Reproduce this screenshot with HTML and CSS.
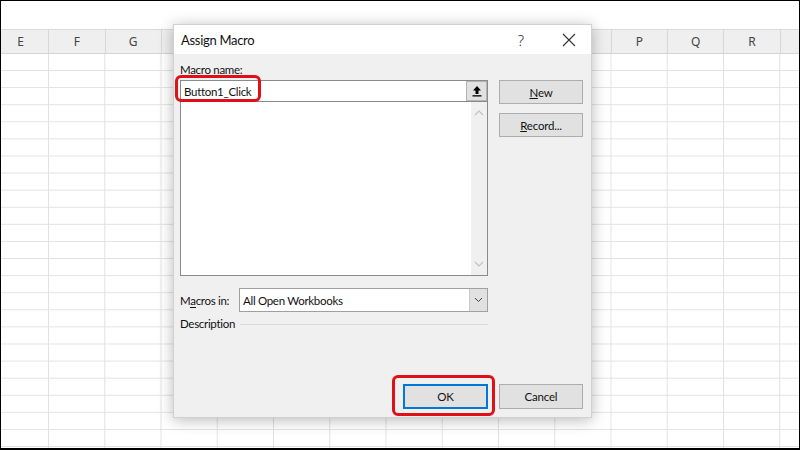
FILE: index.html
```html
<!DOCTYPE html>
<html lang="en">
<head>
    <meta charset="UTF-8">
    <title>Assign Macro</title>
    <link rel="stylesheet" href="styles.css">
</head>
<body>
    <div class="screen">
        <div class="ribbon"></div>
        <div class="col-headers">
            <div class="col">E</div>
            <div class="col">F</div>
            <div class="col">G</div>
            <div class="col"></div>
            <div class="col"></div>
            <div class="col"></div>
            <div class="col"></div>
            <div class="col"></div>
            <div class="col"></div>
            <div class="col"></div>
            <div class="col"></div>
            <div class="col">P</div>
            <div class="col">Q</div>
            <div class="col">R</div>
            <div class="col"></div>
        </div>
        <div class="cells"></div>

        <div class="dialog">
            <div class="titlebar">
                <span class="title">Assign Macro</span>
                <span class="help">?</span>
                <svg class="close" width="14" height="14" viewBox="0 0 14 14">
                    <path d="M1 1 L13 13 M13 1 L1 13" stroke="#333" stroke-width="1.1" fill="none"/>
                </svg>
            </div>
            <div class="dialog-body">
                <div class="main">
                    <div class="left">
                        <div class="label">Macro name:</div>
                        <div class="name-input">
                            <span class="value">Button1_Click</span>
                            <span class="ref-btn">
                                <svg width="10" height="12" viewBox="0 0 10 12">
                                    <path d="M5 1 L1 5.5 H3.5 V9 H6.5 V5.5 H9 Z" fill="#000"/>
                                    <rect x="0.5" y="10.2" width="9" height="1.3" fill="#000"/>
                                </svg>
                            </span>
                            <span class="highlight name-mark"></span>
                        </div>
                        <div class="macro-list">
                            <div class="list-area"></div>
                            <div class="scrollbar">
                                <svg width="10" height="7" viewBox="0 0 10 7"><path d="M1 6 L5 2 L9 6" stroke="#c2c2c2" stroke-width="1.2" fill="none"/></svg>
                                <svg width="10" height="7" viewBox="0 0 10 7"><path d="M1 1 L5 5 L9 1" stroke="#c2c2c2" stroke-width="1.2" fill="none"/></svg>
                            </div>
                        </div>
                        <div class="macros-in">
                            <span class="label-inline">M<u>a</u>cros in:</span>
                            <div class="select">
                                <span class="value">All Open Workbooks</span>
                                <span class="drop-btn">
                                    <svg width="9" height="6" viewBox="0 0 9 6"><path d="M1 1 L4.5 4.5 L8 1" stroke="#444" stroke-width="1" fill="none"/></svg>
                                </span>
                            </div>
                        </div>
                        <div class="description">
                            <span>Description</span>
                            <span class="rule"></span>
                        </div>
                    </div>
                    <div class="side">
                        <button class="btn"><u>N</u>ew</button>
                        <button class="btn"><u>R</u>ecord...</button>
                    </div>
                </div>
                <div class="footer">
                    <div class="ok-wrap">
                        <button class="btn btn-ok">OK</button>
                        <span class="highlight ok-mark"></span>
                    </div>
                    <button class="btn">Cancel</button>
                </div>
            </div>
        </div>
    </div>
</body>
</html>
```

FILE: styles.css
```css
body, html {
    margin: 0;
    padding: 0;
    font-family: Lato, "Noto Sans", sans-serif;
}
.screen {
    position: relative;
    width: 800px;
    height: 450px;
    box-sizing: border-box;
    border: 1px solid #000;
    border-bottom-width: 2px;
    background: #fff;
    overflow: hidden;
    display: flex;
    flex-direction: column;
}
.ribbon {
    height: 28px;
    flex-shrink: 0;
    border-bottom: 1px solid #d9d9d9;
}
.col-headers {
    height: 23px;
    flex-shrink: 0;
    display: flex;
    margin-left: -8px;
    background: #efefef;
    border-bottom: 1px solid #d4d4d4;
}
.col {
    width: 56.25px;
    flex-shrink: 0;
    box-sizing: border-box;
    border-right: 1px solid #d8d8d8;
    text-align: center;
    font-family: "Noto Sans", sans-serif;
    font-size: 12px;
    line-height: 23px;
    color: #444;
}
.cells {
    flex: 1;
    background-image:
        linear-gradient(to right, #e2e2e2 1px, transparent 1px),
        linear-gradient(to bottom, #e2e2e2 1px, transparent 1px);
    background-size: 56.25px 100%, 100% 17.1px;
    background-position: 47px 0, 0 16px;
}

/* dialog */
.dialog {
    position: absolute;
    left: 172px;
    top: 23px;
    width: 419px;
    height: 394px;
    box-sizing: border-box;
    border: 1px solid #d0d0d0;
    background: #f0f0f0;
    box-shadow: 0 2px 14px rgba(0, 0, 0, 0.28);
    display: flex;
    flex-direction: column;
}
.titlebar {
    height: 29px;
    flex-shrink: 0;
    background: #fff;
    display: flex;
    align-items: center;
    padding-left: 7px;
}
.title {
    font-size: 13px;
    letter-spacing: -0.3px;
    color: #111;
    flex: 1;
}
.help {
    font-family: "Noto Sans", sans-serif;
    font-size: 15px;
    font-weight: 300;
    color: #333;
    margin-right: 38px;
}
.close {
    margin-right: 15px;
}
.dialog-body {
    flex: 1;
    display: flex;
    flex-direction: column;
    padding: 8px 8px 8px 6px;
    font-size: 11.5px;
    letter-spacing: -0.3px;
    color: #111;
}
.main {
    display: flex;
    gap: 11px;
}
.left {
    width: 308px;
    display: flex;
    flex-direction: column;
}
.label {
    line-height: 16px;
    margin-bottom: 2px;
}
.name-input {
    position: relative;
    height: 22px;
    box-sizing: border-box;
    border: 1px solid #8a8a8a;
    background: #fff;
    display: flex;
    align-items: center;
}
.name-input .value {
    flex: 1;
    padding-left: 3px;
}
.ref-btn {
    width: 21px;
    height: 20px;
    box-sizing: border-box;
    background: #e1e1e1;
    border: 1px solid #b4b4b4;
    display: flex;
    align-items: center;
    justify-content: center;
}
.highlight {
    position: absolute;
    border: 3px solid #e01017;
    border-radius: 6px;
    pointer-events: none;
}
.name-mark {
    left: -6px;
    top: -6px;
    width: 80px;
    height: 21px;
}
.macro-list {
    height: 175px;
    margin-top: -1px;
    box-sizing: border-box;
    border: 1px solid #8a8a8a;
    background: #fff;
    display: flex;
}
.list-area {
    flex: 1;
}
.scrollbar {
    width: 16px;
    background: #f0f0f0;
    display: flex;
    flex-direction: column;
    justify-content: space-between;
    align-items: center;
    padding: 7px 0;
}
.macros-in {
    margin-top: 12px;
    display: flex;
    align-items: center;
}
.label-inline {
    width: 59px;
}
.label-inline u {
    text-decoration: none;
    border-bottom: 1px solid #111;
    line-height: 12px;
}
.select {
    flex: 1;
    height: 24px;
    box-sizing: border-box;
    border: 1px solid #a0a0a0;
    background: #fff;
    display: flex;
    align-items: center;
}
.select .value {
    flex: 1;
    padding-left: 3px;
}
.drop-btn {
    width: 17px;
    height: 22px;
    background: #e1e1e1;
    border-left: 1px solid #c8c8c8;
    display: flex;
    align-items: center;
    justify-content: center;
}
.description {
    margin-top: 4px;
    display: flex;
    align-items: center;
    gap: 5px;
    line-height: 16px;
}
.rule {
    flex: 1;
    height: 1px;
    background: #dadada;
}
.side {
    width: 84px;
    padding-top: 18px;
    display: flex;
    flex-direction: column;
    gap: 9px;
}
.btn {
    width: 84px;
    height: 24px;
    box-sizing: border-box;
    background: #e1e1e1;
    border: 1px solid #adadad;
    font-family: inherit;
    font-size: 11.5px;
    letter-spacing: -0.2px;
    color: #111;
    padding: 0;
}
.footer {
    margin-top: auto;
    display: flex;
    justify-content: flex-end;
    gap: 11px;
}
.ok-wrap {
    position: relative;
}
.btn-ok {
    width: 85px;
    height: 25px;
    border: 2px solid #0078d7;
}
.footer .btn {
    height: 25px;
}
.ok-mark {
    left: -11px;
    top: -9px;
    right: -7px;
    bottom: -7px;
}
```
